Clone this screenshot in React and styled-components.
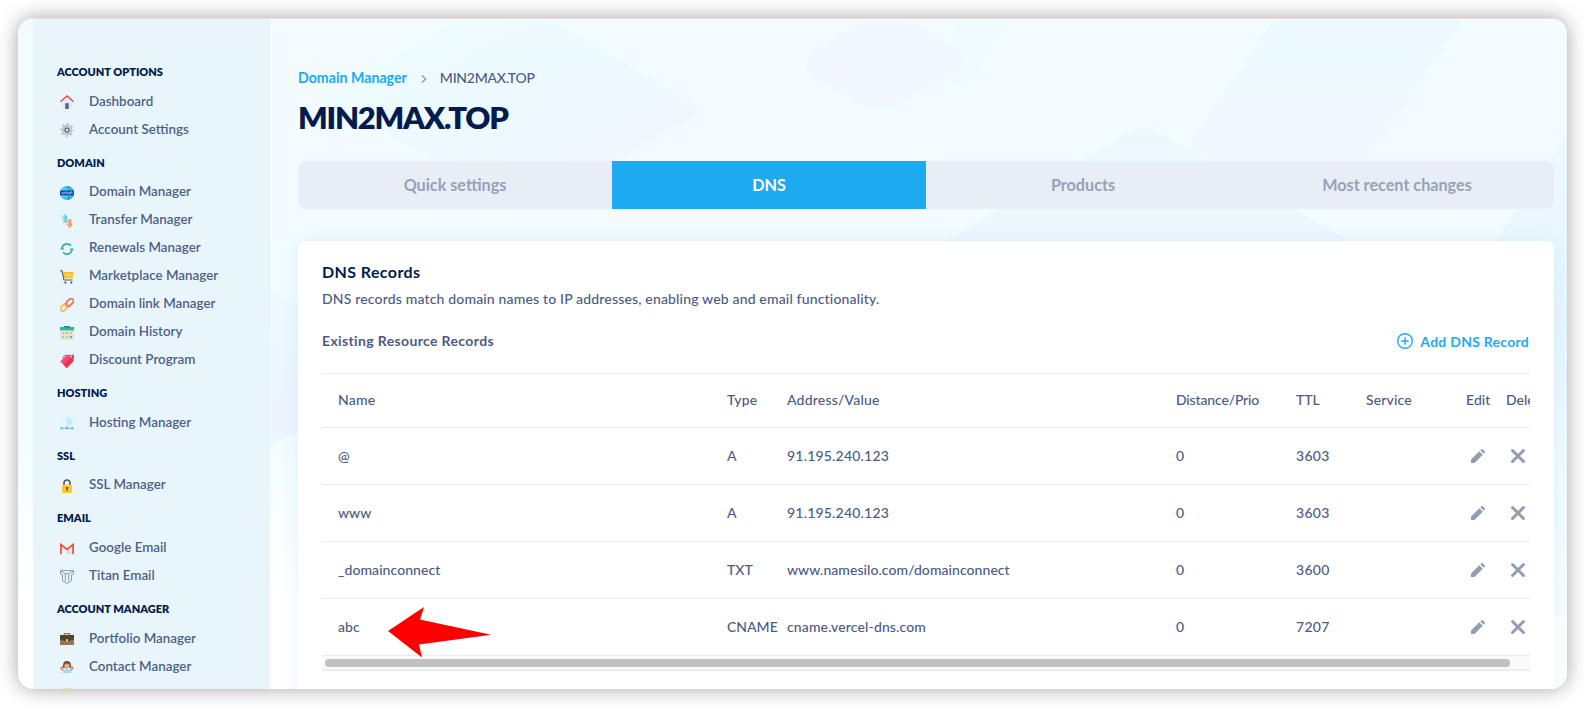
import React from 'react';
import styled, { createGlobalStyle, css } from 'styled-components';

const GlobalStyle = createGlobalStyle`
  *, *::before, *::after { box-sizing: border-box; }
  html, body { margin: 0; padding: 0; }
  body {
    background: #fff;
    color: #4c5b82;
    font-family: Lato, "Open Sans", sans-serif;
    font-size: 14px;
    font-weight: 500;
    overflow: hidden;
  }
`;

const Stage = styled.div`
  display: flex;
  width: 1585px;
  height: 707px;
  padding: 18px;
  overflow: hidden;
`;

const Window = styled.div`
  position: relative;
  display: flex;
  width: 1549px;
  height: 671px;
  padding-left: 15px;
  border-radius: 16px;
  overflow: hidden;
  background: linear-gradient(#f2fcff 0%, #f2fcff 62%, #fff 86%);
  box-shadow: 0 0 20px rgba(0, 0, 0, 0.36);
`;

const Backdrop = styled.svg`
  position: absolute;
  inset: 0;
`;

const TopLine = styled.div`
  position: absolute;
  top: 0;
  left: 0;
  right: 0;
  height: 1px;
  background: #f9d9dc;
`;

const Sidebar = styled.nav`
  position: relative;
  flex: none;
  width: 237px;
  padding: 43.500px 0 0 24px;
  background: #e8f6fc;
`;

const Section = styled.section`
  padding-bottom: 9.4px;
`;

const SectionTitle = styled.h2`
  display: flex;
  align-items: center;
  height: 20px;
  margin: 0 0 5.200px;
  color: #031b4e;
  font-size: 11px;
  font-weight: 800;
  text-transform: uppercase;
`;

const MenuItem = styled.a`
  display: flex;
  align-items: center;
  gap: 15px;
  height: 28px;
  padding-left: 3px;
  font-size: 13.4px;
  font-weight: 600;
  line-height: 28px;
  color: #4f5f86;
  white-space: nowrap;

  svg {
    flex: none;
    width: 14px;
    height: 14px;
    margin-top: 3px;
  }
`;

const Main = styled.main`
  position: relative;
  width: 1256px;
  margin-left: 28px;
  padding-top: 49px;
`;

const Breadcrumb = styled.div`
  display: flex;
  align-items: center;
  height: 20px;

  svg {
    margin: 3px 11px 0 12px;
  }
`;

const CrumbLink = styled.a`
  color: #1eaaf0;
  font-size: 14.2px;
  font-weight: 700;
`;

const CrumbText = styled.span`
  letter-spacing: -0.25px;
  font-weight: 500;
`;

const PageTitle = styled.h1`
  display: flex;
  align-items: center;
  height: 40px;
  margin: 10px 0 24px;
  color: #031b4e;
  font-size: 31px;
  font-weight: 800;
  letter-spacing: -1.25px;
`;

const Tabs = styled.div`
  display: grid;
  grid-template-columns: repeat(4, 1fr);
  height: 48px;
  border-radius: 8px;
  overflow: hidden;
  background: #e9eef6;
`;

const Tab = styled.a`
  display: flex;
  align-items: center;
  justify-content: center;
  padding-bottom: 1px;
  font-size: 16.2px;
  font-weight: 700;
  color: #96a2b8;
  ${p => p.$active && css`
    background: #1eaaf0;
    color: #fff;
  `}
`;

const Card = styled.section`
  height: 600px;
  margin-top: 32px;
  padding: 19px 24px;
  border-radius: 8px;
  background: #fff;
  box-shadow: 0 0 20px rgba(30, 160, 235, 0.1);
`;

const CardTitle = styled.h3`
  height: 24px;
  margin: 0;
  color: #031b4e;
  font-size: 16px;
  font-weight: 700;
  line-height: 24px;
  letter-spacing: 0.4px;
`;

const CardText = styled.p`
  height: 24px;
  margin: 3px 0 0;
  line-height: 24px;
  letter-spacing: 0.165px;
`;

const CardBar = styled.div`
  display: flex;
  justify-content: space-between;
  align-items: center;
  height: 30px;
  margin: 15px 0 17px;
`;

const BarTitle = styled.h4`
  margin: 0;
  padding-bottom: 2px;
  font-size: 14px;
  font-weight: 700;
  letter-spacing: 0.36px;
`;

const AddButton = styled.a`
  display: flex;
  align-items: center;
  gap: 7px;
  padding-right: 1px;
  color: #1eaaf0;
  font-weight: 700;
  letter-spacing: 0.26px;
`;

const TableScroller = styled.div`
  width: 1208px;
  overflow: hidden;
  border-top: 1px solid #ebebeb;
`;

const TableRow = styled.div`
  display: grid;
  grid-template-columns: 389px 60px 389px 120px 70px 100px 40px 60px;
  align-items: center;
  width: 1244px;
  height: ${p => (p.$head ? 54 : 57)}px;
  padding: 0 0 ${p => (p.$head ? 2 : 1)}px 16px;
  border-bottom: 1px solid #ebebeb;
  white-space: nowrap;
`;

const Cell = styled.span`
  display: flex;
  align-items: center;
  letter-spacing: ${p => p.$track || 0}px;
`;

const IconCell = styled.span`
  display: flex;
  padding: 0 0 0 4px;
`;

const ScrollTrack = styled.div`
  height: 15px;
  padding: 3px;
  background: #fafafa;
  border-bottom: 2px solid #e9eff4;
`;

const ScrollThumb = styled.div`
  width: 1185px;
  height: 8px;
  border-radius: 4px;
  background: #c1c1c1;
`;

const Pointer = styled.svg`
  position: absolute;
  left: 369px;
  top: 587px;
`;

const icons = {
  home: (
    <>
      <path d="M2 7 7 2.5 12 7v7H2z" fill="#e8ebec" />
      <path d="M.4 6.8 7 1l6.6 5.8" fill="none" stroke="#e04b42" strokeWidth="1.4" />
      <path d="M5.2 8.3h3.6V14H5.2z" fill="#5d6684" />
    </>
  ),
  gear: (
    <>
      <circle cx="7" cy="7" r="5.2" fill="#c4c7c7" />
      <circle cx="7" cy="7" r="5.9" fill="none" stroke="#c4c7c7" strokeWidth="2.1" strokeDasharray="2.5 2.13" strokeDashoffset="1.2" />
      <circle cx="7" cy="7" r="1.9" fill="#e6ecef" stroke="#5c6b8e" strokeWidth="1.3" />
    </>
  ),
  globe: (
    <>
      <circle cx="7" cy="7" r="7" fill="#2cc2e8" />
      <path d="M7 0a7 7 0 0 1 0 14z" fill="#169fdb" />
      <path d="M3.8 1v12M7 0v14M10.2 1v12M1 3.2h12M1 10.8h12" stroke="#8be2f2" strokeWidth=".4" />
      <rect y="4.4" width="14" height="4.8" rx=".8" fill="#1748a6" />
      <path d="M2 6.1v1.5h1.8V6.1m1 1.5V6.1h1.8v1.5m1-1.5v1.5h1.8V6.1m1 2V6.1h1.6v1.5" fill="none" stroke="#b8d5f5" strokeWidth=".7" />
    </>
  ),
  transfer: (
    <>
      <path d="M4.7 0 8 3.8H6.6v5H2.8v-5H1.4z" fill="#47cbdc" />
      <path d="M4.7 0v8.8H2.8v-5H1.4z" fill="#a5e8ee" />
      <path d="M9.5 14 6.2 10.2h1.4v-5h3.8v5h1.4z" fill="#ff8b58" />
      <path d="M9.5 14V5.2H7.6v5H6.2z" fill="#ffb48e" />
    </>
  ),
  renew: (
    <>
      <path d="M2 6.5A5.1 5.1 0 0 1 11 3.8M12 7.5A5.1 5.1 0 0 1 3 10.2" fill="none" stroke="#35b29a" strokeWidth="1.7" />
      <path d="M0 7.6 2.2 4.4 4.5 7.6zM14 6.4l-2.2 3.2-2.3-3.2z" fill="#35b29a" />
    </>
  ),
  cart: (
    <>
      <path d="M3.2 2h10.4l-1 6.2H4.2z" fill="#fcc02e" />
      <path d="M5.8 4v2.4M8.2 4v2.4M10.7 4v2.4" stroke="#fff0be" strokeWidth=".8" />
      <path d="M0 .7h2l2 9.3h8.6" fill="none" stroke="#4b5966" strokeWidth="1.1" />
      <circle cx="5.4" cy="12.6" r="1.1" fill="#4b5966" />
      <circle cx="11.2" cy="12.6" r="1.1" fill="#4b5966" />
    </>
  ),
  link: (
    <g fill="none" strokeWidth="1.8">
      <rect x="-.2" y="7.1" width="8.4" height="4.8" rx="2.4" transform="rotate(-45 4 9.5)" stroke="#fdbb57" />
      <rect x="5.6" y="2" width="8.4" height="4.8" rx="2.4" transform="rotate(-45 9.8 4.4)" stroke="#f96f5a" />
      <path d="M5.2 8.8 8 6" stroke="#fb9a5c" />
    </g>
  ),
  calendar: (
    <>
      <path d="M0 4h14v10H0z" fill="#e8e5d3" />
      <path d="M0 1h14v3.4H0z" fill="#2bb9a0" />
      <path d="M4 0h6v1.6H4z" fill="#527a80" />
      <path d="M2.2 6.2h2v1.7h-2zm3.8 0h2v1.7H6zm3.8 0h2v1.7h-2zM2.2 10.2h2v1.7h-2zm3.8 0h2v1.7H6z" fill="#bdb9aa" />
      <path d="M9.8 10.2h2.1v1.7H9.8z" fill="#23ad98" />
    </>
  ),
  tag: (
    <>
      <path d="M.2 7.5 6 1.8 14 .4l-.8 6.8L6.8 14z" fill="#fb4677" />
      <path d="m14 .4-.8 6.8L6.8 14 3.5 10.8z" fill="#ee3157" />
      <path d="M2.8 4.2C3.6.6 8.5 0 11.2 3" fill="none" stroke="#7c7188" strokeWidth="1" />
      <circle cx="11.3" cy="2.8" r=".8" fill="#fff" />
    </>
  ),
  hosting: (
    <>
      <path d="M3 8.7A2.8 2.8 0 0 1 3 3.5C4 0 9.6-.5 11 3.5a2.7 2.7 0 0 1 0 5.2z" fill="#dff6ff" />
      <path d="M7 .7c2 0 3.4 1 4 2.8a2.7 2.7 0 0 1 0 5.2H7z" fill="#c2edfd" />
      <path d="M1 12.3h12M7 9.4v2" stroke="#8495aa" strokeWidth=".8" />
      <circle cx="1.5" cy="12.3" r="1.4" fill="#63cdf4" />
      <circle cx="7" cy="12.2" r="1.4" fill="#63cdf4" />
      <circle cx="12.5" cy="12.3" r="1.4" fill="#63cdf4" />
    </>
  ),
  lock: (
    <>
      <path d="M4 6V4a3 3 0 0 1 6 0v2" fill="none" stroke="#455a64" strokeWidth="1.6" />
      <rect x="2" y="5.8" width="10" height="8.2" rx="1" fill="#fec62f" />
      <path d="M7 8v4M5.8 8.9h2.4" stroke="#594d37" strokeWidth="1.2" />
    </>
  ),
  gmail: (
    <>
      <path d="M1.5 2.5h11V12h-11z" fill="#eef0f2" />
      <path d="m7 7 5.4 5H7z" fill="#d4d9dd" />
      <path d="M.9 12.3V2.6L7 7.5l6.1-4.9v9.7" fill="none" stroke="#ed4a3e" strokeWidth="1.7" />
    </>
  ),
  titan: (
    <g fill="none" stroke="#8090ae" strokeWidth=".9">
      <path d="M.5.6h13v3.4l-2 .8v6L7 13.4l-4.5-2.600v-6l-2-.8z" />
      <path d="M1 1.200 5.300 3.800v7.400M13 1.200 8.700 3.800v7.400M5.300 3.800h3.400" />
    </g>
  ),
  briefcase: (
    <>
      <path d="M4.3 3.5V1.600h5.400v1.900" fill="none" stroke="#8c7751" strokeWidth="1.1" />
      <path d="M0 3h14v10H0z" fill="#967654" />
      <path d="M0 3h14v4.500L7 9.500 0 7.500z" fill="#52432e" />
      <path d="M6 7.300h2V9.500H6z" fill="#f2d993" />
    </>
  ),
  person: (
    <>
      <path d="M3 8C2.5 1.500 5 1 7 1s4.500.5 4 7z" fill="#78503d" />
      <path d="M4.500 4.800 7 3.500l2.500 1.300v3L7 9.800 4.500 7.800z" fill="#e8af8c" />
      <path d="M3.500 10 7 9l3.500 1 .8 3H2.700z" fill="#9adcf5" />
      <path d="M3.300 10.300 1.200 8.300l1.600-2M10.700 10.300l2.100-2-1.600-2" fill="none" stroke="#d09577" strokeWidth="1.800" />
    </>
  ),
  profile: <rect x="2" y="0" width="10" height="12" fill="#f8dfa0" />,
};

const menu = [
  ['Account options', [['home', 'Dashboard'], ['gear', 'Account Settings']]],
  ['Domain', [
    ['globe', 'Domain Manager'], ['transfer', 'Transfer Manager'], ['renew', 'Renewals Manager'],
    ['cart', 'Marketplace Manager'], ['link', 'Domain link Manager'], ['calendar', 'Domain History'],
    ['tag', 'Discount Program'],
  ]],
  ['Hosting', [['hosting', 'Hosting Manager']]],
  ['SSL', [['lock', 'SSL Manager']]],
  ['Email', [['gmail', 'Google Email'], ['titan', 'Titan Email']]],
  ['Account manager', [['briefcase', 'Portfolio Manager'], ['person', 'Contact Manager'], ['profile', 'Profile Manager']]],
];

const records = [
  { name: '@', type: 'A', value: '91.195.240.123', track: 0.2, ttl: '3603' },
  { name: 'www', type: 'A', value: '91.195.240.123', track: 0.2, ttl: '3603' },
  { name: '_domainconnect', type: 'TXT', value: 'www.namesilo.com/domainconnect', track: 0.06, ttl: '3600' },
  { name: 'abc', type: 'CNAME', value: 'cname.vercel-dns.com', track: 0.13, ttl: '7207' },
];

const tabs = ['Quick settings', 'DNS', 'Products', 'Most recent changes'];

const BackdropShapes = () => (
  <Backdrop width="1549" height="671" viewBox="18 18 1549 671">
    <defs>
      <linearGradient id="wide" x1="0" y1="0" x2="1" y2="1">
        <stop offset="0.2" stopColor="#eefbff" />
        <stop offset="0.55" stopColor="#edf9ff" />
        <stop offset="0.85" stopColor="#f1f7fe" />
      </linearGradient>
      <linearGradient id="slant" x1="0" y1="0" x2="0" y2="1">
        <stop offset="0.1" stopColor="#ecfafe" />
        <stop offset="0.8" stopColor="#f1f8fe" />
      </linearGradient>
      <linearGradient id="peak" x1="0" y1="128" x2="0" y2="241" gradientUnits="userSpaceOnUse">
        <stop offset="0" stopColor="#ebf9fe" />
        <stop offset="1" stopColor="#eef7fe" />
      </linearGradient>
      <linearGradient id="side" x1="0" y1="0" x2="0" y2="1">
        <stop offset="0" stopColor="#edf9ff" />
        <stop offset="0.4" stopColor="#e8f5ff" />
        <stop offset="0.62" stopColor="#eefaff" />
        <stop offset="1" stopColor="#fafdff" />
      </linearGradient>
      <linearGradient id="left" x1="0" y1="0" x2="0" y2="1">
        <stop offset="0" stopColor="#effaff" />
        <stop offset="0.7" stopColor="#edf5ff" />
      </linearGradient>
    </defs>
    <path d="M334 92 407 50 462 18h83l57 32 90 52q10 7 0 14L540 205h-30L432 160l-98-58q-8-5 0-10z" fill="url(#wide)" />
    <path d="M960 18h52l-46 72-24-12z" fill="#effbfe" />
    <path d="M863 18h42l54 33q10 8 0 17l-67 39q-14 6-28 0l-53-33q-11-9 0-19z" fill="#f2f8fe" />
    <path d="M1275 18h190l-100 143h-180q3-16 12-29z" fill="url(#slant)" />
    <path d="M1131 131q13-5 26 0l193 110H945z" fill="url(#peak)" />
    <path d="M1567 135v480h-14V241h-58z" fill="url(#side)" />
    <path d="m270 290 28 15v127l-28 12z" fill="url(#left)" />
  </Backdrop>
);

const PencilIcon = () => (
  <svg width="16" height="16" viewBox="0 0 16 16" fill="#919eb2">
    <path d="M1 11.4 9.300 3.200l3.500 3.500L4.500 15H1zM10.300 2.300l.9-.9q.9-.8 1.800 0l1.600 1.600q.8.9 0 1.800l-.9.9z" />
  </svg>
);

const CrossIcon = () => (
  <svg width="16" height="16" viewBox="0 0 16 16">
    <path d="m2.500 2.500 11 11m0-11-11 11" stroke="#919eb2" strokeWidth="3" strokeLinecap="round" />
  </svg>
);

export default function App() {
  return (
    <Stage>
      <GlobalStyle />
      <Window>
        <BackdropShapes />
        <Sidebar>
          {menu.map(([title, items]) => (
            <Section key={title}>
              <SectionTitle>{title}</SectionTitle>
              {items.map(([icon, label]) => (
                <MenuItem key={label}>
                  <svg viewBox="0 0 14 14">{icons[icon]}</svg>
                  {label}
                </MenuItem>
              ))}
            </Section>
          ))}
        </Sidebar>
        <Main>
          <Breadcrumb>
            <CrumbLink>Domain Manager</CrumbLink>
            <svg width="10" height="10" viewBox="0 0 10 10" fill="none" stroke="#8d98ac" strokeWidth="1.3">
              <path d="m3 1.500 3.700 3.500L3 8.500" />
            </svg>
            <CrumbText>MIN2MAX.TOP</CrumbText>
          </Breadcrumb>
          <PageTitle>MIN2MAX.TOP</PageTitle>
          <Tabs>
            {tabs.map(label => <Tab key={label} $active={label === 'DNS'}>{label}</Tab>)}
          </Tabs>
          <Card>
            <CardTitle>DNS Records</CardTitle>
            <CardText>DNS records match domain names to IP addresses, enabling web and email functionality.</CardText>
            <CardBar>
              <BarTitle>Existing Resource Records</BarTitle>
              <AddButton>
                <svg width="16" height="16" viewBox="0 0 16 16" fill="none" stroke="#1eaaf0" strokeWidth="1.4">
                  <circle cx="8" cy="8" r="7.300" />
                  <path d="M8 4.300v7.400M4.300 8h7.400" />
                </svg>
                Add DNS Record
              </AddButton>
            </CardBar>
            <TableScroller>
              <TableRow $head>
                <Cell $track={0.2}>Name</Cell>
                <Cell $track={0.2}>Type</Cell>
                <Cell $track={0.2}>Address/Value</Cell>
                <Cell $track={-0.15}>Distance/Prio</Cell>
                <Cell>TTL</Cell>
                <Cell $track={0.15}>Service</Cell>
                <Cell $track={0.1}>Edit</Cell>
                <Cell>Delete</Cell>
              </TableRow>
              {records.map(r => (
                <TableRow key={r.name}>
                  <Cell $track={0.06}>{r.name}</Cell>
                  <Cell>{r.type}</Cell>
                  <Cell $track={r.track}>{r.value}</Cell>
                  <Cell>0</Cell>
                  <Cell $track={0.3}>{r.ttl}</Cell>
                  <Cell />
                  <IconCell><PencilIcon /></IconCell>
                  <IconCell><CrossIcon /></IconCell>
                </TableRow>
              ))}
              <ScrollTrack><ScrollThumb /></ScrollTrack>
            </TableScroller>
          </Card>
        </Main>
        <Pointer width="106" height="54" viewBox="387 605 106 54">
          <path d="M388 631 424 607 420 619.500 491 634.700 419 644.500 422 657.500z" fill="#f00" />
        </Pointer>
        <TopLine />
      </Window>
    </Stage>
  );
}
